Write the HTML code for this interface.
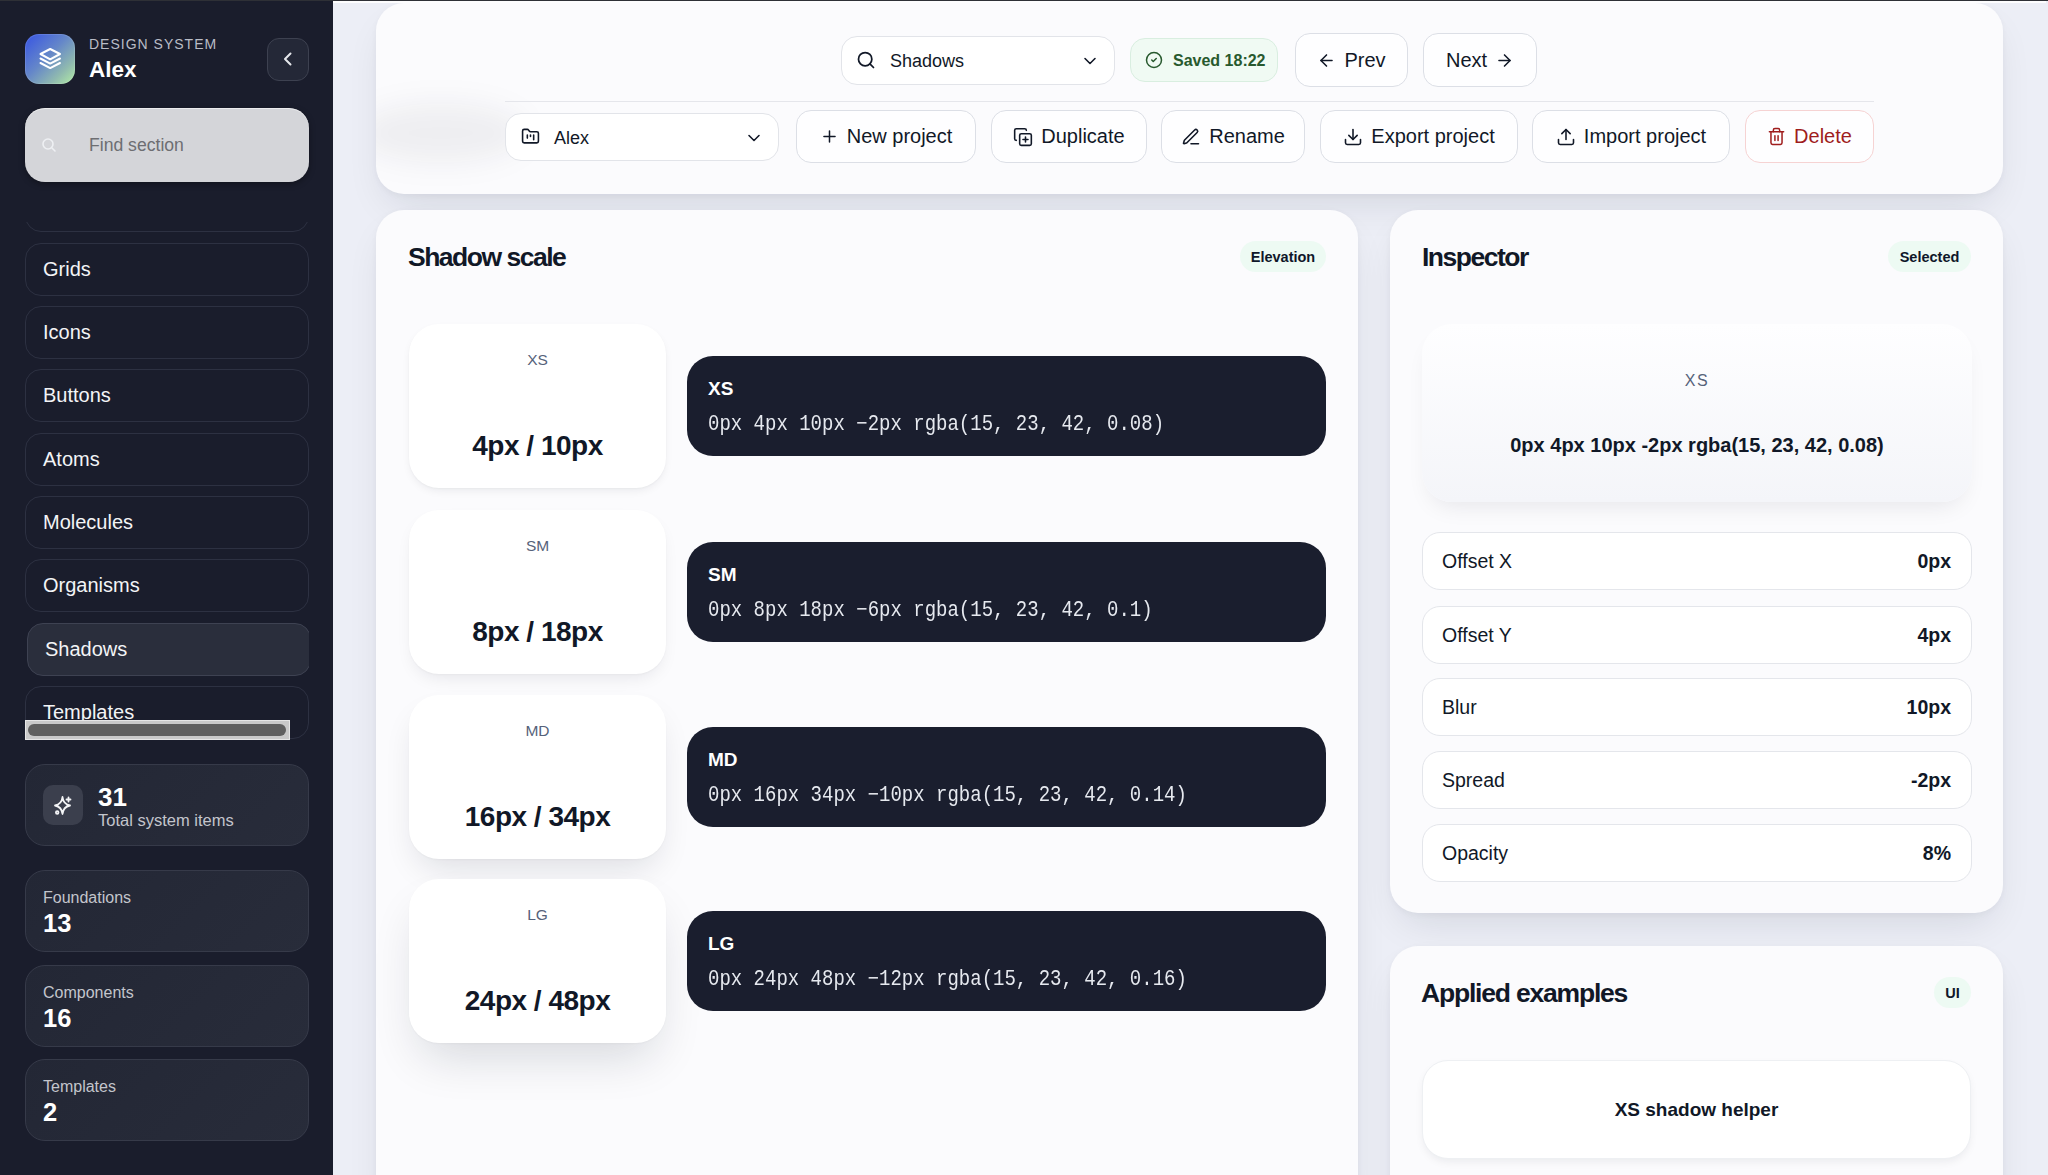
<!DOCTYPE html>
<html><head><meta charset="utf-8">
<style>
*{box-sizing:border-box;margin:0;padding:0}
html,body{width:2048px;height:1175px;overflow:hidden}
body{position:relative;background:#eceef6;font-family:"Liberation Sans",sans-serif;color:#111827}
.abs{position:absolute}
.topline{left:0;top:0;width:2048px;height:1px;background:#2e3036;z-index:50}
.topwhite{left:333px;top:1px;width:1713px;height:2px;background:#fdfdfe;z-index:49}
/* sidebar */
#side{left:0;top:0;width:333px;height:1175px;background:#1a1d2c}
.logo{left:25px;top:34px;width:50px;height:50px;border-radius:14px;background:linear-gradient(135deg,#3653e4 0%,#6587c9 45%,#8fb9b0 75%,#b3eea4 100%);box-shadow:inset 0 0 0 1px rgba(255,255,255,.12)}
.brand-sub{left:89px;top:37px;font-size:14px;line-height:14px;letter-spacing:1px;color:#b9bcc6;font-weight:400}
.brand{left:89px;top:58.5px;font-size:22.5px;line-height:22px;font-weight:700;color:#fff}
.collapse{left:267px;top:38px;width:42px;height:43px;border-radius:12px;border:1.5px solid #3d4150;background:#242837}
.search{left:25px;top:108px;width:284px;height:74px;border-radius:20px;background:#d4d5d9;box-shadow:inset 0 1px 0 rgba(255,255,255,.55),0 2px 6px rgba(0,0,0,.35)}
.search span{position:absolute;left:64px;top:22px;font-size:17.6px;line-height:30px;color:#6d6e72}
.nav{left:25px;top:222px;width:284px;height:518px;overflow:hidden}
.item{position:absolute;left:0;width:284px;height:53px;border-radius:16px;border:1px solid #2d3142;display:flex;align-items:center;padding-left:17px;font-size:20px;color:#f3f4f6}
.item.active{left:2px;background:#2a2e3c;border-color:#3e4252}
.hscroll{left:25px;top:720px;width:265px;height:20px;background:#c9c9c9;border:1px solid #e6e6e6}
.hscroll i{position:absolute;left:2px;top:3px;width:258px;height:12px;border-radius:6px;background:#5f5f5f}
.stat{position:absolute;left:25px;width:284px;height:82px;border-radius:20px;background:linear-gradient(135deg,#232735 0%,#282c3a 100%);border:1px solid #363a49}
.stat .lbl{position:absolute;left:17px;top:18px;font-size:16px;line-height:18px;color:#c3c5cc}
.stat .num{position:absolute;left:17px;top:39px;font-size:25.5px;line-height:26px;font-weight:700;color:#fff}
.card{background:#fbfbfd;box-shadow:0 18px 40px -12px rgba(15,23,42,.12),0 2px 6px rgba(15,23,42,.04)}
.sel{border:1.5px solid #e2e4e9;border-radius:16px;background:#fff}
.saved{border:1.5px solid #d9eee0;border-radius:15px;background:#f0faf3}
.btn{border:1.5px solid #dcdfe6;border-radius:15px;background:#fefeff;display:flex;align-items:center;justify-content:center;gap:8px;font-size:20px;color:#111827}
.btn.del{border-color:#f6d3d3;color:#9f1d1d}
.card.big{border-radius:28px}
.h2{font-size:26.5px;line-height:30px;font-weight:700;color:#111827;letter-spacing:-1.5px}
.badge{border-radius:16px;background:#edfaf3;display:flex;align-items:center;justify-content:center;font-size:14.5px;font-weight:700;color:#0f172a}
.pcard{width:257px;height:164px;border-radius:30px;background:#fff}
.plab{position:absolute;left:0;right:0;top:26.5px;text-align:center;font-size:15.5px;line-height:18px;color:#56627a}
.pval{position:absolute;left:0;right:0;top:107px;text-align:center;font-size:28px;line-height:30px;font-weight:700;color:#111827;letter-spacing:-0.5px}
.code{width:639px;height:100px;border-radius:26px;background:#1a1e2e;color:#fff}
.ct{position:absolute;left:21px;top:23px;font-size:19px;line-height:20px;font-weight:700}
.cc{position:absolute;left:21px;top:59px;font-family:"Liberation Mono",monospace;font-size:19px;line-height:20px;color:#e6e9ef;white-space:pre;transform:scaleY(1.12);transform-origin:0 15px}
.ipv{border-radius:30px;background:linear-gradient(180deg,#fefeff 0%,#f4f5f9 100%);box-shadow:0 12px 24px -10px rgba(15,23,42,.10)}
.irow{width:550px;height:58px;border-radius:18px;background:#fff;border:1.5px solid #e4e6eb;display:flex;align-items:center;justify-content:space-between;padding:0 20px 0 19px;font-size:19.5px;color:#111827}
.irow b{font-weight:700}
.helper{border-radius:26px;background:#fff;border:1px solid #eef0f3;box-shadow:0 4px 10px -2px rgba(15,23,42,.08);display:flex;align-items:center;justify-content:center;font-size:19px;font-weight:700;color:#111827}
</style></head>
<body>
<div class="abs topline"></div>
<div class="abs topwhite"></div>

<div id="side" class="abs">
  <div class="abs logo">
    <svg width="50" height="50" viewBox="0 0 50 50" fill="none" stroke="#fff" stroke-width="2" stroke-linejoin="round" stroke-linecap="round">
      <path d="M25.2 15 L35 20 L25.2 25.3 L15.5 20 Z"/>
      <path d="M15.5 24.5 L25.2 29.6 L35 24.5"/>
      <path d="M15.5 29 L25.2 34.1 L35 29"/>
    </svg>
  </div>
  <div class="abs brand-sub">DESIGN SYSTEM</div>
  <div class="abs brand">Alex</div>
  <div class="abs collapse">
    <svg width="42" height="42" viewBox="0 0 42 42" fill="none" stroke="#e5e7eb" stroke-width="2" stroke-linecap="round" stroke-linejoin="round"><path d="M22.5 14.5 L17 20 L22.5 25.5"/></svg>
  </div>
  <div class="abs search">
    <svg class="abs" style="left:16px;top:29px" width="16" height="16" viewBox="0 0 16 16" fill="none" stroke="#eef0f3" stroke-width="1.6" stroke-linecap="round"><circle cx="7" cy="7" r="5"/><path d="M11 11 L14 14"/></svg>
    <span>Find section</span>
  </div>
  <div class="abs nav">
    <div class="item" style="top:-43px"></div>
    <div class="item" style="top:21px">Grids</div>
    <div class="item" style="top:84px">Icons</div>
    <div class="item" style="top:147px">Buttons</div>
    <div class="item" style="top:211px">Atoms</div>
    <div class="item" style="top:274px">Molecules</div>
    <div class="item" style="top:337px">Organisms</div>
    <div class="item active" style="top:401px">Shadows</div>
    <div class="item" style="top:464px">Templates</div>
  </div>
  <div class="abs hscroll"><i></i></div>
  <div class="stat" style="top:764px">
    <div class="abs" style="left:17px;top:20px;width:40px;height:40px;border-radius:10px;background:#3b3f4d">
      <svg width="40" height="40" viewBox="0 0 40 40" fill="none" stroke="#f3f4f6" stroke-width="1.8" stroke-linejoin="round" stroke-linecap="round">
        <path d="M19.5 12 Q20.3 19.2 27 20.5 Q20.3 21.8 19.5 29 Q18.7 21.8 12 20.5 Q18.7 19.2 19.5 12 Z"/>
        <path d="M25.5 12.5 V16.5 M23.5 14.5 H27.5"/>
        <circle cx="14.2" cy="27.5" r="1.3"/>
      </svg>
    </div>
    <div class="abs" style="left:72px;top:20px;font-size:26px;line-height:24px;font-weight:700;color:#fff">31</div>
    <div class="abs" style="left:72px;top:46.5px;font-size:16.5px;line-height:16px;color:#c3c5cc">Total system items</div>
  </div>
  <div class="stat" style="top:870px"><div class="lbl">Foundations</div><div class="num">13</div></div>
  <div class="stat" style="top:965px"><div class="lbl">Components</div><div class="num">16</div></div>
  <div class="stat" style="top:1059px"><div class="lbl">Templates</div><div class="num">2</div></div>
</div>


<!-- TOP BAR -->
<div class="abs card" style="left:376px;top:3px;width:1627px;height:191px;border-radius:28px;overflow:hidden"><div class="abs" style="left:-20px;top:100px;width:170px;height:60px;border-radius:50%;background:rgba(15,23,42,.055);filter:blur(14px)"></div></div>
<div class="abs sel" style="left:841px;top:36px;width:274px;height:49px">
  <span class="abs" style="left:14px;top:13px"><svg width="20" height="20" viewBox="0 0 24 24" fill="none" stroke="#111827" stroke-width="2.1" stroke-linecap="round" stroke-linejoin="round" ><circle cx="11" cy="11" r="8"/><path d="m21 21-4.3-4.3"/></svg></span>
  <span class="abs" style="left:48px;top:14px;font-size:18px;line-height:20px">Shadows</span>
  <span class="abs" style="left:238px;top:14px"><svg width="20" height="20" viewBox="0 0 24 24" fill="none" stroke="#111827" stroke-width="1.9" stroke-linecap="round" stroke-linejoin="round" ><path d="m6 9 6 6 6-6"/></svg></span>
</div>
<div class="abs saved" style="left:1130px;top:38px;width:148px;height:44px">
  <span class="abs" style="left:14px;top:12px"><svg width="18" height="18" viewBox="0 0 24 24" fill="none" stroke="#28592e" stroke-width="2" stroke-linecap="round" stroke-linejoin="round" ><circle cx="12" cy="12" r="10"/><path d="m9 12 2 2 4-4"/></svg></span>
  <span class="abs" style="left:42px;top:13px;font-size:16px;line-height:18px;font-weight:700;color:#28592e">Saved 18:22</span>
</div>
<div class="abs btn" style="left:1295px;top:33px;width:113px;height:54px"><svg width="19" height="19" viewBox="0 0 24 24" fill="none" stroke="#111827" stroke-width="2" stroke-linecap="round" stroke-linejoin="round" ><path d="m12 19-7-7 7-7"/><path d="M19 12H5"/></svg><span>Prev</span></div>
<div class="abs btn" style="left:1423px;top:33px;width:114px;height:54px"><span>Next</span><svg width="19" height="19" viewBox="0 0 24 24" fill="none" stroke="#111827" stroke-width="2" stroke-linecap="round" stroke-linejoin="round" ><path d="M5 12h14"/><path d="m12 5 7 7-7 7"/></svg></div>
<div class="abs" style="left:505px;top:101px;width:1369px;height:1px;background:#e5e6eb"></div>

<div class="abs sel" style="left:505px;top:113px;width:274px;height:48px">
  <span class="abs" style="left:15px;top:13px"><svg width="19" height="19" viewBox="0 0 24 24" fill="none" stroke="#111827" stroke-width="2" stroke-linecap="round" stroke-linejoin="round" ><path d="M4 20h16a2 2 0 0 0 2-2V8a2 2 0 0 0-2-2h-7.93a2 2 0 0 1-1.66-.9l-.82-1.2A2 2 0 0 0 7.93 3H4a2 2 0 0 0-2 2v13c0 1.1.9 2 2 2Z"/><path d="M8 10v4"/><path d="M12 10v2"/><path d="M16 10v6"/></svg></span>
  <span class="abs" style="left:48px;top:14px;font-size:18px;line-height:20px">Alex</span>
  <span class="abs" style="left:238px;top:14px"><svg width="20" height="20" viewBox="0 0 24 24" fill="none" stroke="#111827" stroke-width="1.9" stroke-linecap="round" stroke-linejoin="round" ><path d="m6 9 6 6 6-6"/></svg></span>
</div>
<div class="abs btn" style="left:796px;top:110px;width:180px;height:53px"><svg width="19" height="19" viewBox="0 0 24 24" fill="none" stroke="#111827" stroke-width="1.9" stroke-linecap="round" stroke-linejoin="round" ><path d="M5 12h14"/><path d="M12 5v14"/></svg><span>New project</span></div>
<div class="abs btn" style="left:991px;top:110px;width:156px;height:53px"><svg width="20" height="20" viewBox="0 0 24 24" fill="none" stroke="#111827" stroke-width="1.9" stroke-linecap="round" stroke-linejoin="round" ><rect width="14" height="14" x="8" y="8" rx="2" ry="2"/><path d="M4 16c-1.1 0-2-.9-2-2V4c0-1.1.9-2 2-2h10c1.1 0 2 .9 2 2"/><path d="M15 12v6"/><path d="M12 15h6"/></svg><span>Duplicate</span></div>
<div class="abs btn" style="left:1161px;top:110px;width:144px;height:53px"><svg width="20" height="20" viewBox="0 0 24 24" fill="none" stroke="#111827" stroke-width="1.9" stroke-linecap="round" stroke-linejoin="round" ><path d="M12 20h9"/><path d="M16.376 3.622a1 1 0 0 1 3.002 3.002L7.368 18.635a2 2 0 0 1-.855.506l-2.872.838a.5.5 0 0 1-.62-.62l.838-2.872a2 2 0 0 1 .506-.854z"/></svg><span>Rename</span></div>
<div class="abs btn" style="left:1320px;top:110px;width:198px;height:53px"><svg width="20" height="20" viewBox="0 0 24 24" fill="none" stroke="#111827" stroke-width="1.9" stroke-linecap="round" stroke-linejoin="round" ><path d="M21 15v4a2 2 0 0 1-2 2H5a2 2 0 0 1-2-2v-4"/><path d="m7 10 5 5 5-5"/><path d="M12 15V3"/></svg><span>Export project</span></div>
<div class="abs btn" style="left:1532px;top:110px;width:198px;height:53px"><svg width="20" height="20" viewBox="0 0 24 24" fill="none" stroke="#111827" stroke-width="1.9" stroke-linecap="round" stroke-linejoin="round" ><path d="M21 15v4a2 2 0 0 1-2 2H5a2 2 0 0 1-2-2v-4"/><path d="m17 8-5-5-5 5"/><path d="M12 3v12"/></svg><span>Import project</span></div>
<div class="abs btn del" style="left:1745px;top:110px;width:129px;height:53px"><svg width="19" height="19" viewBox="0 0 24 24" fill="none" stroke="#9f1d1d" stroke-width="1.9" stroke-linecap="round" stroke-linejoin="round" ><path d="M3 6h18"/><path d="M19 6v14c0 1-1 2-2 2H7c-1 0-2-1-2-2V6"/><path d="M8 6V4c0-1 1-2 2-2h4c1 0 2 1 2 2v2"/><path d="M10 11v6"/><path d="M14 11v6"/></svg><span>Delete</span></div>
<!-- SHADOW SCALE -->
<div class="abs card big" style="left:376px;top:210px;width:982px;height:1000px"></div>
<div class="abs h2" style="left:408px;top:242px">Shadow scale</div>
<div class="abs badge" style="left:1240px;top:241px;width:86px;height:31px">Elevation</div>
<div class="abs pcard" style="left:409px;top:324px;box-shadow:0 4px 10px -2px rgba(15,23,42,.08),0 1px 2px rgba(15,23,42,.03)"><div class="plab">XS</div><div class="pval">4px / 10px</div></div>
<div class="abs code" style="left:687px;top:356px"><div class="ct">XS</div><div class="cc">0px 4px 10px &minus;2px rgba(15, 23, 42, 0.08)</div></div>
<div class="abs pcard" style="left:409px;top:510px;box-shadow:0 8px 18px -6px rgba(15,23,42,.10),0 1px 2px rgba(15,23,42,.03)"><div class="plab">SM</div><div class="pval">8px / 18px</div></div>
<div class="abs code" style="left:687px;top:542px"><div class="ct">SM</div><div class="cc">0px 8px 18px &minus;6px rgba(15, 23, 42, 0.1)</div></div>
<div class="abs pcard" style="left:409px;top:695px;box-shadow:0 16px 34px -10px rgba(15,23,42,.14),0 1px 2px rgba(15,23,42,.03)"><div class="plab">MD</div><div class="pval">16px / 34px</div></div>
<div class="abs code" style="left:687px;top:727px"><div class="ct">MD</div><div class="cc">0px 16px 34px &minus;10px rgba(15, 23, 42, 0.14)</div></div>
<div class="abs pcard" style="left:409px;top:879px;box-shadow:0 24px 48px -12px rgba(15,23,42,.16),0 1px 2px rgba(15,23,42,.03)"><div class="plab">LG</div><div class="pval">24px / 48px</div></div>
<div class="abs code" style="left:687px;top:911px"><div class="ct">LG</div><div class="cc">0px 24px 48px &minus;12px rgba(15, 23, 42, 0.16)</div></div>

<!-- INSPECTOR -->
<div class="abs card big" style="left:1390px;top:210px;width:613px;height:703px"></div>
<div class="abs h2" style="left:1422px;top:242px">Inspector</div>
<div class="abs badge" style="left:1888px;top:241px;width:83px;height:31px">Selected</div>
<div class="abs ipv" style="left:1422px;top:324px;width:550px;height:178px">
  <div class="abs" style="left:0;top:368px"></div>
  <div style="position:absolute;left:0;right:0;top:372px"></div>
  <div style="position:absolute;left:0;right:0;top:48px;text-align:center;font-size:16px;line-height:18px;letter-spacing:1.5px;color:#56627a">XS</div>
  <div style="position:absolute;left:0;right:0;top:110px;text-align:center;font-size:20px;line-height:22px;font-weight:700;color:#111827">0px 4px 10px -2px rgba(15, 23, 42, 0.08)</div>
</div>
<div class="abs irow" style="left:1422px;top:532px"><span>Offset X</span><b>0px</b></div>
<div class="abs irow" style="left:1422px;top:606px"><span>Offset Y</span><b>4px</b></div>
<div class="abs irow" style="left:1422px;top:678px"><span>Blur</span><b>10px</b></div>
<div class="abs irow" style="left:1422px;top:751px"><span>Spread</span><b>-2px</b></div>
<div class="abs irow" style="left:1422px;top:824px"><span>Opacity</span><b>8%</b></div>

<!-- APPLIED -->
<div class="abs card big" style="left:1390px;top:946px;width:613px;height:400px"></div>
<div class="abs h2" style="left:1421px;top:978px;letter-spacing:-1.2px">Applied examples</div>
<div class="abs badge" style="left:1934px;top:977px;width:37px;height:31px">UI</div>
<div class="abs helper" style="left:1422px;top:1060px;width:549px;height:99px">XS shadow helper</div>
</body></html>
